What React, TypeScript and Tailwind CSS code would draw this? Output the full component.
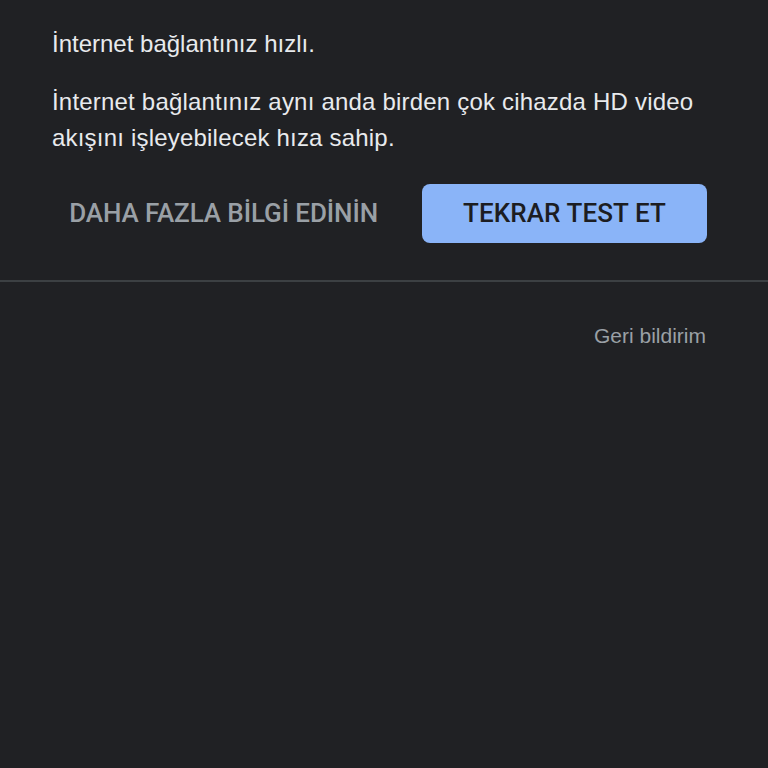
export default function App() {
  return (
    <div
      className="h-[768px] w-[768px] overflow-hidden bg-[#202124]"
      style={{ fontFamily: '"Liberation Sans", Arial, sans-serif' }}
    >
      {/* Result text */}
      <div className="px-[52px] pt-[27px]">
        <p className="text-[24px] leading-[34px] text-[#e8eaed]">İnternet bağlantınız hızlı.</p>
        <p className="mt-[23px] text-[24px] leading-[36px] tracking-[0.2px] text-[#e8eaed]">
          İnternet bağlantınız aynı anda birden çok cihazda HD video akışını işleyebilecek hıza sahip.
        </p>
      </div>

      {/* Actions */}
      <div className="mt-[28px] flex items-center justify-end gap-[44px] pr-[61px] font-['Roboto',sans-serif]">
        <button className="text-[26px] font-medium tracking-[-0.1px] text-[#9aa0a6]">DAHA FAZLA BİLGİ EDİNİN</button>
        <button className="flex h-[59px] w-[285px] items-center justify-center rounded-[8px] bg-[#8ab4f8] text-[26px] font-medium tracking-[0.1px] text-[#1c1d22]">
          TEKRAR TEST ET
        </button>
      </div>

      <div className="mt-[37px] h-[2px] bg-[#3c4043]" />

      <div className="flex justify-end pr-[62px] pt-[38px]">
        <span className="text-[21px] text-[#9aa0a6]">Geri bildirim</span>
      </div>
    </div>
  )
}
